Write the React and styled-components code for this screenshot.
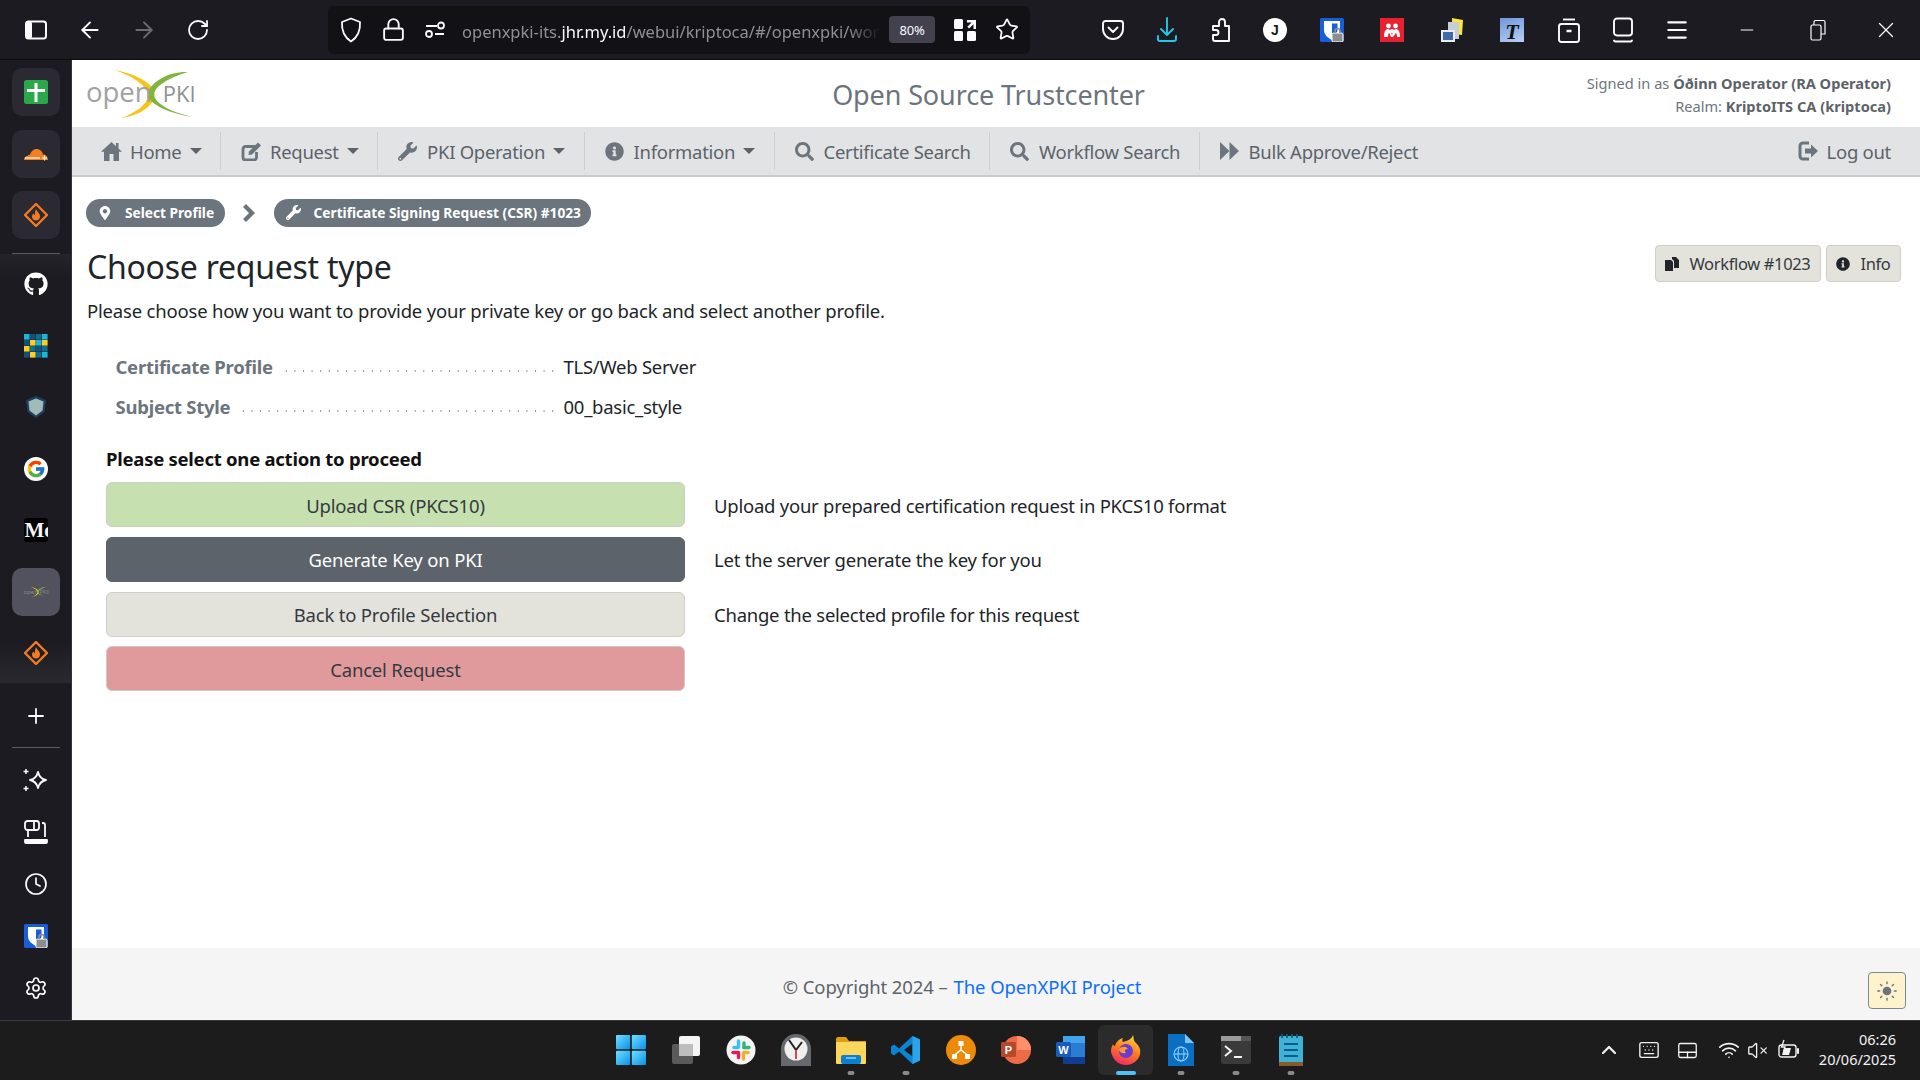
import React from 'react';
import styled, { createGlobalStyle } from 'styled-components';
import { ArrowLeft, ArrowRight, RotateCw, Lock, Star, Menu, Plus, Clock, Settings, ChevronUp, Keyboard, Touchpad, Wifi, VolumeX, Sun, Minus, X } from 'lucide-react';
import { FaGithub, FaWrench, FaInfoCircle, FaSearch, FaMapMarkerAlt } from 'react-icons/fa';
import { FcGoogle } from 'react-icons/fc';

const FONT = '"Noto Sans", "Open Sans", sans-serif';

const GlobalStyle = createGlobalStyle`
  html, body { margin: 0; padding: 0; background: #1c1b22; }
  * { box-sizing: border-box; }
  body { font-family: ${FONT}; }
`;

const Desktop = styled.div`
  width: 1920px;
  height: 1080px;
  overflow: hidden;
  display: grid;
  grid-template-columns: 72px minmax(0, 1fr);
  grid-template-rows: 60px 1fr 60px;
`;

/* browser toolbar */
const BrowserBar = styled.header`
  grid-column: 1 / 3;
  background: #1c1b22;
  border-bottom: 1px solid #0e0e12;
  display: flex;
  align-items: center;
  padding-left: 9px;
  color: #fbfbfe;
`;

const Slot = styled.div`
  width: ${p => p.$w || 54}px;
  height: 40px;
  flex: none;
  display: flex;
  align-items: center;
  justify-content: center;
  padding-left: ${p => p.$shift || 0}px;
  color: ${p => p.$dim ? '#6b6b72' : '#fbfbfe'};
`;

const UrlBox = styled.div`
  width: 702px;
  height: 48px;
  flex: none;
  margin-left: 103px;
  margin-right: 56px;
  background: #111116;
  border-radius: 6px;
  display: flex;
  align-items: center;
  padding-left: 2px;
`;

const UrlSlot = styled(Slot)`
  width: ${p => p.$w || 42}px;
`;

const UrlText = styled.div`
  width: 419px;
  margin-left: 6px;
  padding-top: 3px;
  white-space: nowrap;
  overflow: hidden;
  font-size: 16.5px;
  color: #8f8f96;
  -webkit-mask-image: linear-gradient(to right, #000 92%, transparent);
  mask-image: linear-gradient(to right, #000 92%, transparent);
  b { font-weight: 400; color: #fbfbfe; }
`;

const ZoomBadge = styled.div`
  width: 46px;
  height: 27px;
  margin-left: 8px;
  border-radius: 4px;
  background: #42414d;
  color: #fbfbfe;
  font-size: 13px;
  letter-spacing: -0.3px;
  display: flex;
  align-items: center;
  justify-content: center;
`;

const Avatar = styled.div`
  width: 24px;
  height: 24px;
  border-radius: 50%;
  background: #fff;
  color: #1c1b22;
  font-family: "Liberation Sans", sans-serif;
  font-size: 14px;
  font-weight: 700;
  display: flex;
  align-items: center;
  justify-content: center;
`;

const RedTile = styled.div`
  width: 24px;
  height: 24px;
  background: #e8202f;
  color: #fff;
  display: flex;
  align-items: center;
  justify-content: center;
`;

const BlueTile = styled.div`
  width: 24px;
  height: 24px;
  background: linear-gradient(160deg, #6f97dc, #b9cdf2);
  color: #111;
  font-family: "Liberation Serif", serif;
  font-style: italic;
  font-weight: 700;
  font-size: 22px;
  line-height: 28px;
  text-align: center;
`;

/* sidebar */
const Sidebar = styled.aside`
  background: #1c1b22;
  border-right: 1px solid #33323a;
  padding-top: 8px;
  display: flex;
  flex-direction: column;
  align-items: center;
`;

const Tile = styled.div`
  width: 48px;
  height: 48px;
  flex: none;
  border-radius: 10px;
  background: #2b2a33;
  margin-bottom: ${p => p.$gap ?? 13.5}px;
  display: flex;
  align-items: center;
  justify-content: center;
  color: #fbfbfe;
`;

const SideDivider = styled.div`
  width: 48px;
  height: 1px;
  flex: none;
  background: #5b5b63;
  margin: ${p => p.$margin};
`;

const PanelGroup = styled.div`
  width: 71px;
  flex: none;
  padding-top: 6px;
  height: 429px;
  display: flex;
  flex-direction: column;
  align-items: center;
  background: linear-gradient(to bottom, #25242a 0, #1c1b22 22px, #1c1b22 388px, #2a292f 100%);
`;

const PanelSlot = styled.div`
  width: 48px;
  height: 48px;
  flex: none;
  margin-bottom: 13.5px;
  border-radius: 10px;
  background: ${p => p.$active ? '#52525e' : 'transparent'};
  display: flex;
  align-items: center;
  justify-content: center;
  color: #fff;
`;

const SideTool = styled.div`
  height: ${p => p.$h || 52}px;
  width: 48px;
  flex: none;
  display: flex;
  align-items: center;
  justify-content: center;
  color: #fbfbfe;
`;

const MediumTile = styled.div`
  width: 24px;
  height: 24px;
  background: #000;
  border-radius: 3px;
  overflow: hidden;
  color: #f4f4f4;
  font-family: "Liberation Serif", serif;
  font-weight: 700;
  font-size: 21px;
  line-height: 24px;
  white-space: nowrap;
  padding-left: 1px;
`;

const GoogleDisc = styled.div`
  width: 24px;
  height: 24px;
  border-radius: 50%;
  background: #fff;
  display: flex;
  align-items: center;
  justify-content: center;
`;

const MiniLogo = styled.div`
  position: relative;
  width: 24px;
  height: 12px;
  color: #85858c;
  font-size: 6px;
  line-height: 12px;
  white-space: nowrap;
`;

const MiniSwoosh = styled.svg`
  position: absolute;
  left: 0;
  top: -1px;
`;

/* page */
const Page = styled.main`
  background: #fff;
  display: flex;
  flex-direction: column;
  min-height: 0;
  color: #212529;
`;

const TopHeader = styled.div`
  height: 67px;
  flex: none;
  display: grid;
  grid-template-columns: 1fr auto 1fr;
  align-items: center;
  padding: 0 29px 0 14px;
`;

const Logo = styled.div`
  position: relative;
  width: 112px;
  height: 52px;
  display: flex;
  align-items: baseline;
  padding-top: 7px;
  font-family: "Open Sans", sans-serif;
  line-height: 1.2;
`;

const LogoSwoosh = styled.svg`
  position: absolute;
  left: 0;
  top: 0;
`;

const LogoWord = styled.span`
  position: relative;
  z-index: 1;
  font-size: 27.5px;
  color: #a0a2a4;
`;

const LogoPki = styled.span`
  position: relative;
  z-index: 1;
  margin-left: 11px;
  font-size: 22px;
  color: #8f9193;
`;

const SiteTitle = styled.div`
  font-size: 27px;
  letter-spacing: -0.12px;
  color: #6c757d;
  white-space: nowrap;
  padding-top: 2px;
`;

const SignedIn = styled.div`
  justify-self: end;
  text-align: right;
  font-size: 14.6px;
  line-height: 23px;
  color: #6c757d;
  padding-top: 3px;
  b { font-weight: 700; color: #5c636a; }
`;

const Nav = styled.nav`
  height: 50px;
  flex: none;
  background: #e1e3e5;
  border-bottom: 2px solid #c9cbcd;
  display: flex;
  align-items: center;
  padding: 0 29px 0 9px;
  color: #5c636a;
  font-size: 18.5px;
  letter-spacing: -0.28px;
`;

const NavItem = styled.div`
  height: 38px;
  display: flex;
  align-items: center;
  padding: 0 18.4px 0 20px;
  border-right: ${p => p.$last ? 'none' : '1px solid #cdcfd1'};
  white-space: nowrap;
`;

const NavIcon = styled.span`
  width: 21px;
  margin-right: 8px;
  flex: none;
  display: flex;
  align-items: center;
  justify-content: flex-start;
  color: #6c757d;
`;

const Caret = styled.span`
  width: 0;
  height: 0;
  margin-left: 8px;
  border-left: 6px solid transparent;
  border-right: 6px solid transparent;
  border-top: 6px solid #5c636a;
`;

const LogOut = styled.div`
  margin-left: auto;
  display: flex;
  align-items: center;
  white-space: nowrap;
`;

const Content = styled.div`
  flex: 1;
  min-height: 0;
  padding: 21px 19px 0 14px;
`;

const Crumbs = styled.div`
  display: flex;
  align-items: center;
  height: 28px;
  padding-top: 1px;
`;

const Crumb = styled.div`
  height: 28px;
  padding: 0 10.5px 0 12px;
  border-radius: 14px;
  background: #6c757d;
  color: #fff;
  font-size: 13.7px;
  font-weight: 700;
  display: flex;
  align-items: center;
  white-space: nowrap;
  svg { margin-right: 13px; }
`;

const CrumbArrow = styled.div`
  width: 49px;
  display: flex;
  justify-content: center;
  color: #6c757d;
`;

const TitleRow = styled.div`
  display: flex;
  justify-content: space-between;
  align-items: flex-start;
  margin-top: 19px;
`;

const Title = styled.h1`
  margin: 2px 0 0 1px;
  font-size: 32px;
  letter-spacing: -0.25px;
  line-height: 40px;
  font-weight: 400;
  color: #212529;
`;

const TitleTools = styled.div`
  display: flex;
  gap: 5px;
`;

const ToolButton = styled.div`
  height: 37px;
  padding: 0 9.5px;
  background: #e3e3dc;
  border: 1px solid #cfcfc9;
  border-radius: 4px;
  font-size: 16.5px;
  letter-spacing: -0.35px;
  display: flex;
  align-items: center;
  color: #343a40;
  svg { margin-right: 10px; color: #212529; }
`;

const Intro = styled.p`
  margin: 11px 0 0 1px;
  font-size: 18.5px;
  letter-spacing: -0.19px;
  line-height: 26px;
`;

const Facts = styled.div`
  margin-top: 22px;
  padding-left: 29.5px;
  letter-spacing: -0.26px;
`;

const FactRow = styled.div`
  height: 40px;
  display: flex;
  align-items: center;
  font-size: 18.5px;
`;

const FactLabel = styled.div`
  width: 448px;
  display: flex;
  align-items: center;
  font-weight: 700;
  color: #6c757d;
  white-space: nowrap;
`;

const Leader = styled.span`
  flex: 1;
  height: 2px;
  margin: 9px 5px 0 9px;
  background-image: radial-gradient(circle, #8a9197 0.8px, transparent 1px);
  background-size: 8.6px 2px;
  background-position: left center;
`;

const Actions = styled.section`
  margin-top: 21px;
  padding-left: 20px;
`;

const ActionsTitle = styled.div`
  height: 24px;
  line-height: 24px;
  font-size: 18.5px;
  letter-spacing: -0.25px;
  font-weight: 700;
  margin-bottom: 11px;
  color: #111;
`;

const ActionRow = styled.div`
  display: grid;
  grid-template-columns: 579px 1fr;
  column-gap: 29px;
  align-items: center;
  margin-bottom: 9.8px;
  font-size: 18.5px;
  letter-spacing: -0.24px;
`;

const VARIANTS = {
  upload: { bg: '#c7e0af', border: '#c9cec4', fg: '#343a40' },
  generate: { bg: '#5c636a', border: '#5c636a', fg: '#fff' },
  back: { bg: '#e3e3dc', border: '#cfcfcb', fg: '#343a40' },
  cancel: { bg: '#e19a9c', border: '#d5c5c5', fg: '#343a40' },
};

const ActionButton = styled.div`
  height: 45px;
  border-radius: 6px;
  border: 1.5px solid ${p => VARIANTS[p.$kind].border};
  background: ${p => VARIANTS[p.$kind].bg};
  color: ${p => VARIANTS[p.$kind].fg};
  display: flex;
  align-items: center;
  justify-content: center;
  letter-spacing: -0.18px;
  padding-top: 1px;
`;

const ActionHint = styled.span`
  padding-top: 1px;
`;

const Footer = styled.footer`
  position: relative;
  height: 72px;
  flex: none;
  background: #f5f5f5;
  display: flex;
  align-items: center;
  justify-content: center;
  padding: 4px 68px 0 0;
  font-size: 18.5px;
  letter-spacing: -0.1px;
  color: #5c636a;
  a { color: #0d6efd; text-decoration: none; margin-left: 6px; }
`;

const ThemeToggle = styled.div`
  position: absolute;
  right: 14px;
  top: 24px;
  width: 38px;
  height: 37px;
  border-radius: 4px;
  border: 1px solid #7f8790;
  background: #fff3cd;
  color: #6c757d;
  display: flex;
  align-items: center;
  justify-content: center;
`;

/* windows taskbar */
const Taskbar = styled.footer`
  grid-column: 1 / 3;
  background: #1c1c1c;
  border-top: 1px solid #3a3a3a;
  display: flex;
  align-items: center;
  padding-left: 603px;
  padding-bottom: 1px;
  color: #f2f2f2;
`;

const TaskSlot = styled.div`
  position: relative;
  width: 55px;
  height: 50px;
  flex: none;
  border-radius: 6px;
  background: ${p => p.$active ? '#2b2b2b' : 'transparent'};
  display: flex;
  align-items: center;
  justify-content: center;
  &::after {
    content: '';
    display: ${p => p.$run ? 'block' : 'none'};
    position: absolute;
    bottom: 0;
    left: 50%;
    transform: translateX(-50%);
    width: ${p => p.$active ? 20 : 7}px;
    height: 4px;
    border-radius: 2px;
    background: ${p => p.$active ? '#4fc1f5' : '#8a8a8a'};
  }
`;

const Tray = styled.div`
  margin-left: auto;
  display: flex;
  align-items: center;
  padding-right: 24px;
`;

const TraySlot = styled.div`
  width: ${p => p.$w}px;
  display: flex;
  justify-content: center;
  align-items: center;
  color: #f2f2f2;
  svg { flex: none; }
`;

const TrayClock = styled.div`
  margin-left: 6px;
  width: 78px;
  text-align: right;
  font-size: 14.5px;
  line-height: 20px;
  padding-bottom: 3px;
`;

/* drawn icons */
const SidebarToggle = () => (
  <svg width="24" height="24" viewBox="0 0 24 24" fill="none">
    <rect x="2" y="3.500" width="20" height="17" rx="2.500" stroke="#fbfbfe" strokeWidth="2" />
    <rect x="2" y="3.500" width="6" height="17" rx="2" fill="#fbfbfe" />
  </svg>
);

const ShieldIcon = () => (
  <svg width="24" height="26" viewBox="0 0 24 26" fill="none" stroke="#fbfbfe" strokeWidth="1.800" strokeLinejoin="round">
    <path d="M12 1.500 L21 5 C21.500 13 19 20 12 24.500 C5 20 2.500 13 3 5 Z" />
  </svg>
);

const PermIcon = () => (
  <svg width="22" height="22" viewBox="0 0 22 22" fill="none" stroke="#fbfbfe" strokeWidth="1.800">
    <path d="M2 7h11M11 15h9" />
    <circle cx="17" cy="6.500" r="3" />
    <circle cx="5" cy="15" r="3" />
  </svg>
);

const QrIcon = () => (
  <svg width="24" height="24" viewBox="0 0 24 24" fill="#fbfbfe">
    <rect x="1" y="1" width="9" height="10" rx="1.500" />
    <rect x="1" y="13" width="9" height="10" rx="1.500" />
    <rect x="14" y="13" width="9" height="10" rx="1.500" />
    <path d="M14 2h9v9h-2.500V6.200L16 10.500 14.300 8.800 18.700 4.500H14z" />
  </svg>
);

const PocketIcon = () => (
  <svg width="24" height="24" viewBox="0 0 24 24" fill="none" stroke="#fbfbfe" strokeWidth="1.900" strokeLinecap="round" strokeLinejoin="round">
    <path d="M4.500 3h15A2.500 2.500 0 0 1 22 5.500V11a10 10 0 0 1-20 0V5.500A2.500 2.500 0 0 1 4.500 3z" />
    <path d="M7.500 9.500 12 14l4.500-4.500" />
  </svg>
);

const DownloadIcon = () => (
  <svg width="24" height="26" viewBox="0 0 24 26" fill="none" stroke="#22c8e8" strokeWidth="1.900" strokeLinecap="round" strokeLinejoin="round">
    <path d="M12 1v17M6 12l6 6 6-6" />
    <path d="M3 19v3a2 2 0 0 0 2 2h14a2 2 0 0 0 2-2v-3" />
  </svg>
);

const PuzzleIcon = () => (
  <svg width="24" height="26" viewBox="0 0 24 26" fill="none" stroke="#fbfbfe" strokeWidth="1.900" strokeLinejoin="round">
    <path d="M10 9V5a3 3 0 0 1 6 0v4h4v15H6a2 2 0 0 1-2-2v-4h3a2.500 2.500 0 0 0 0-5H4v-4z" />
  </svg>
);

const Bitwarden = () => (
  <svg width="24" height="24" viewBox="0 0 24 24">
    <rect width="24" height="24" rx="1.500" fill="#175ddc" />
    <path d="M4 3h16v9c0 5-4 8-8 10-4-2-8-5-8-10z" fill="#fff" />
    <path d="M12 5.500h5.500v6.500c0 3-2.500 5.200-5.500 7z" fill="#175ddc" />
    <rect x="12" y="15" width="11" height="9" rx="1.500" fill="#8d8d8d" stroke="#fff" strokeWidth="1" />
    <path d="M15 15v-2a2.500 2.500 0 0 1 5 0v2" fill="none" stroke="#8d8d8d" strokeWidth="1.600" />
  </svg>
);

const MendeleyIcon = () => (
  <svg width="16" height="14" viewBox="0 0 16 14" fill="#fff">
    <circle cx="4.500" cy="3" r="2.400" /><circle cx="11.500" cy="3" r="2.400" /><circle cx="8" cy="8" r="2" />
    <path d="M0 14c0-6 2-8 4-8s3 3 4 6c1-3 2-6 4-6s4 2 4 8h-3c0-2-.5-4-1.200-4L9 14H7L5.200 10C4.500 10 4 12 4 14z" />
  </svg>
);

const DocsIcon = () => (
  <svg width="24" height="26" viewBox="0 0 24 26">
    <path d="M12 1l11 2-1 15-10-1z" fill="#f4e63c" />
    <rect x="8" y="5" width="11" height="17" fill="#c8ccd4" />
    <rect x="1" y="13" width="14" height="12" fill="#e9ecf0" />
    <rect x="3" y="15" width="10" height="8" fill="#3d6aa8" />
  </svg>
);

const ContainerIcon = () => (
  <svg width="24" height="26" viewBox="0 0 24 26" fill="none" stroke="#fbfbfe" strokeWidth="1.900" strokeLinejoin="round">
    <rect x="2" y="7" width="20" height="18" rx="2.500" />
    <path d="M6 2.500h12" /><path d="M9.500 14h5" strokeWidth="2.500" />
  </svg>
);

const TabsIcon = () => (
  <svg width="24" height="26" viewBox="0 0 24 26" fill="none" stroke="#fbfbfe" strokeWidth="1.900" strokeLinejoin="round" strokeLinecap="round">
    <rect x="3" y="1.500" width="18" height="17" rx="3" />
    <path d="M3 23.500a2 2 0 0 0 2 1h14a2 2 0 0 0 2-1" />
  </svg>
);

const RestoreIcon = () => (
  <svg width="16" height="22" viewBox="0 0 16 22" fill="none" stroke="#fbfbfe" strokeWidth="1.200">
    <rect x="1" y="6" width="10" height="15" rx="1.500" />
    <path d="M4 6V3a1.500 1.500 0 0 1 1.500-1.500h8A1.500 1.500 0 0 1 15 3v12h-4" />
  </svg>
);

const SheetIcon = () => (
  <svg width="24" height="24" viewBox="0 0 24 24">
    <rect width="24" height="24" rx="2.500" fill="#2ba84a" />
    <path d="M10.500 3h3v6H21v3h-7.500v10h-3V12H3V9h7.500z" fill="#fff" />
  </svg>
);

const CloudIcon = () => (
  <svg width="24" height="24" viewBox="0 0 24 24">
    <path d="M0 18c0-2.500 1.500-4 3.500-4 .5-1 1.500-1.500 2.500-1.200C7 9.500 9.500 7 12.500 7c3.500 0 6 2.500 6.500 5.500 2.500 0 5 2 5 5.500z" fill="#f38020" />
    <path d="M1 16h15" stroke="#fff" strokeWidth="1.200" />
    <path d="M18 16h5M20.500 13.500v5" stroke="#fff" strokeWidth="1.200" />
  </svg>
);

const DiamondFlame = () => (
  <svg width="24" height="24" viewBox="0 0 24 24" fill="none">
    <path d="M12 1 L23 12 L12 23 L1 12 Z" stroke="#f47b20" strokeWidth="2.400" strokeLinejoin="round" />
    <path d="M12 6c1 3 4 4 4 7.500 0 2.500-2 4-4 4s-4-1.500-4-4c0-1.500 1-2.500 1.500-3 .5 1 1 1.500 1.500 1.500 0-2 0-4 1-6z" fill="#f47b20" />
  </svg>
);

const GridIcon = () => {
  const c = { a: '#1fb4d8', b: '#14507f', t: '#0f6f86', y: '#f8cf26' };
  const rows = ['abta', 'byay', 'ytbt', 'byta'];
  return (
    <svg width="24" height="24" viewBox="0 0 24 24">
      {rows.map((r, y) => r.split('').map((k, x) => (
        <rect key={`${x}-${y}`} x={x * 6} y={y * 6} width="5.600" height="5.600" fill={c[k]} />
      )))}
    </svg>
  );
};

const HexShield = () => (
  <svg width="24" height="24" viewBox="0 0 24 24">
    <path d="M12 1 L22 5 L20.500 17 L12 23 L3.500 17 L2 5 Z" fill="#1f3f5e" />
    <path d="M12 3.500 L19.500 6.500 L18.500 15.500 L12 20.500 L5.500 15.500 L4.500 6.500 Z" fill="#9fbdb8" />
  </svg>
);

const SparkIcon = () => (
  <svg width="26" height="26" viewBox="0 0 26 26" fill="none" stroke="#fbfbfe" strokeWidth="1.900" strokeLinejoin="round">
    <path d="M15 5c1 4 3 7 8 8-5 1-7 4-8 8-1-4-3-7-8-8 5-1 7-4 8-8z" />
    <path d="M3 2v5M.5 4.500h5M3 19v5M.5 21.500h5" strokeWidth="1.500" />
  </svg>
);

const SyncedIcon = () => (
  <svg width="24" height="24" viewBox="0 0 24 24" fill="none" stroke="#fbfbfe" strokeWidth="1.800" strokeLinejoin="round">
    <rect x="1" y="1" width="14" height="9" rx="2.500" />
    <path d="M10 1v9" />
    <path d="M18 3h1a2 2 0 0 1 2 2v12M4 10v7" />
    <path d="M1 20h22v2a1 1 0 0 1-1 1H2a1 1 0 0 1-1-1z" fill="#fbfbfe" />
  </svg>
);

const Swoosh = () => (
  <>
    <path d="M29 2 C55 7 73 19 68 31 C63 42 49 48 36 50 C50 44 61 37 62 28 C62 18 48 9 29 2 Z" fill="#f5c518" />
    <path d="M102 4 C85 3 67 12 62 24 C59 34 80 45 107 49 C88 45 71 37 68 28 C67 18 85 9 102 4 Z" fill="#7fb53c" />
  </>
);

const HomeGlyph = () => (
  <svg width="21" height="20" viewBox="0 0 21 20" fill="currentColor">
    <path d="M10.500 1 L15 5.200 V2 H17.500 V7.500 L21 10.800 H18 V20 H12.500 V13 H8.500 V20 H3 V10.800 H0 Z" />
  </svg>
);

const EditGlyph = () => (
  <svg width="21" height="20" viewBox="0 0 21 20" fill="none" stroke="currentColor">
    <path d="M15 5.500H4.500A2.500 2.500 0 0 0 2 8v8.500A2.500 2.500 0 0 0 4.500 19H13a2.500 2.500 0 0 0 2.500-2.500V11" strokeWidth="2.800" />
    <path d="M7.500 14 L8 10.500 L17 1.500 L20 4.500 L11 13.500 Z" fill="currentColor" stroke="none" />
  </svg>
);

const ForwardGlyph = () => (
  <svg width="19" height="18" viewBox="0 0 19 18" fill="currentColor">
    <path d="M0 0 L9.500 9 L0 18 Z" /><path d="M9.500 0 L19 9 L9.500 18 Z" />
  </svg>
);

const LogOutGlyph = () => (
  <svg width="21" height="20" viewBox="0 0 21 20" fill="none">
    <path d="M11 2H5a3 3 0 0 0-3 3v10a3 3 0 0 0 3 3h6" stroke="currentColor" strokeWidth="3" />
    <path d="M7 7.500h6V3.500l7 6.500-7 6.500v-4H7z" fill="currentColor" />
  </svg>
);

const CrumbChevron = () => (
  <svg width="12" height="18" viewBox="0 0 12 18" fill="currentColor">
    <path d="M0 3 L3 0 L12 9 L3 18 L0 15 L6 9 Z" />
  </svg>
);

const WorkflowGlyph = () => (
  <svg width="14" height="14" viewBox="0 0 14 14" fill="currentColor">
    <path d="M0 3h6l2 2v9H0z" />
    <path d="M7 0h4l3 3v8H9V4L7 2z" />
  </svg>
);

const WinLogo = () => (
  <svg width="30" height="30" viewBox="0 0 30 30">
    <defs>
      <linearGradient id="wing" x1="0" y1="0" x2="1" y2="1">
        <stop offset="0" stopColor="#6fe0ff" />
        <stop offset="1" stopColor="#0a8fe8" />
      </linearGradient>
    </defs>
    <rect x="0" y="0" width="14.200" height="14.200" rx="1" fill="url(#wing)" />
    <rect x="15.800" y="0" width="14.200" height="14.200" rx="1" fill="url(#wing)" />
    <rect x="0" y="15.800" width="14.200" height="14.200" rx="1" fill="url(#wing)" />
    <rect x="15.800" y="15.800" width="14.200" height="14.200" rx="1" fill="url(#wing)" />
  </svg>
);

const TaskViewIcon = () => (
  <svg width="30" height="30" viewBox="0 0 30 30">
    <rect x="1" y="9" width="21" height="20" rx="2" fill="#5a5a5a" />
    <rect x="8" y="1" width="21" height="20" rx="2" fill="#f4f4f4" />
    <rect x="8" y="9" width="14" height="12" fill="#bdbdbd" />
  </svg>
);

const SlackIcon = () => (
  <svg width="30" height="30" viewBox="0 0 30 30">
    <circle cx="15" cy="15" r="14.500" fill="#f4f4f4" />
    <g strokeWidth="3.400" strokeLinecap="round">
      <path d="M12.500 6v6" stroke="#36c5f0" /><path d="M8 12.500h4" stroke="#36c5f0" />
      <path d="M18 8v4.500" stroke="#2eb67d" /><path d="M18 12.500h5" stroke="#2eb67d" />
      <path d="M17.500 18v6" stroke="#ecb22e" /><path d="M18 17.500h4" stroke="#ecb22e" />
      <path d="M12.500 17.500v5" stroke="#e01e5a" /><path d="M7 17.500h5" stroke="#e01e5a" />
    </g>
  </svg>
);

const ClockAppIcon = () => (
  <svg width="30" height="32" viewBox="0 0 30 32">
    <path d="M0 32V15a15 15 0 0 1 30 0v17z" fill="#666a6e" />
    <circle cx="15" cy="15" r="11.500" fill="#f0f0f0" />
    <path d="M15 16L8 6M15 16l6-8" stroke="#222" strokeWidth="2" />
    <path d="M15 16v9" stroke="#d33" strokeWidth="1.800" />
  </svg>
);

const FolderIcon = () => (
  <svg width="30" height="28" viewBox="0 0 30 28">
    <path d="M0 3a2 2 0 0 1 2-2h8l3 4h17v3H0z" fill="#d9a012" />
    <rect x="0" y="6" width="30" height="22" rx="1" fill="#fbd75b" />
    <rect x="5" y="19" width="20" height="9" rx="2" fill="#0c7fd0" />
    <path d="M10 22h10" stroke="#8fd0f5" strokeWidth="1.500" />
  </svg>
);

const VscodeIcon = () => (
  <svg width="30" height="30" viewBox="0 0 30 30">
    <path d="M21.500 1 L29 4.500 V25.500 L21.500 29 L8 16.500 L3 20.500 L0 18.500 V11.500 L3 9.500 L8 13.500 Z M21.500 8.500 L13 15 L21.500 21.500 Z" fill="#0a84d6" />
    <path d="M21.500 1 L29 4.500 V25.500 L21.500 29 Z" fill="#2aa5ec" />
  </svg>
);

const OrangeAppIcon = () => (
  <svg width="30" height="30" viewBox="0 0 30 30">
    <ellipse cx="15" cy="15" rx="15" ry="15" fill="#ee8a0a" />
    <g fill="none" stroke="#fff" strokeWidth="1.500">
      <path d="M15 11v4M8.500 20l6.500-5 6.500 5" />
    </g>
    <g fill="#fff">
      <rect x="12.500" y="6" width="5" height="5" /><rect x="6" y="19" width="5" height="5" /><rect x="19" y="19" width="5" height="5" />
    </g>
  </svg>
);

const OfficeIcon = ({ letter, tile, shades }) => (
  <svg width="30" height="30" viewBox="0 0 30 30">
    {shades}
    <rect x="0" y="7" width="15" height="15" rx="1.500" fill={tile} />
    <text x="7.500" y="18.500" textAnchor="middle" fill="#fff" fontSize="11" fontWeight="700" fontFamily="Liberation Sans, sans-serif">{letter}</text>
  </svg>
);

const FirefoxIcon = () => (
  <svg width="30" height="30" viewBox="0 0 30 30">
    <defs>
      <linearGradient id="ffg" x1="0.7" y1="0" x2="0.3" y2="1">
        <stop offset="0" stopColor="#ffd43b" />
        <stop offset="0.5" stopColor="#ff7a1f" />
        <stop offset="1" stopColor="#f0266a" />
      </linearGradient>
    </defs>
    <path d="M22 0c1 3 0 5 3 8 3 3 5 6 4 11-1 6-7 11-14 11C7 30 1 24 0 16c0-3 1-5 2-7 0 1 1 2 2 2 1-4 4-7 8-8-1 2-1 3 0 4 4-1 9-3 10-7z" fill="url(#ffg)" />
    <circle cx="15" cy="16" r="7" fill="#6a3bd1" />
    <path d="M8 14c3-3 7-3 9 0-3 0-4 2-2 4-4 1-7-1-7-4z" fill="#ff9a2e" />
  </svg>
);

const GlobeFileIcon = () => (
  <svg width="26" height="32" viewBox="0 0 26 32">
    <path d="M0 0h17l9 9v23H0z" fill="#0a6fc2" />
    <path d="M17 0l9 9h-9z" fill="#7cc4f0" />
    <g fill="none" stroke="#8fd0f5" strokeWidth="1.100">
      <circle cx="13" cy="20" r="7" />
      <ellipse cx="13" cy="20" rx="3" ry="7" />
      <path d="M6 20h14" />
    </g>
  </svg>
);

const TerminalIcon = () => (
  <svg width="30" height="28" viewBox="0 0 30 28">
    <rect width="30" height="28" rx="2" fill="#3a3a3a" />
    <rect width="20" height="5" fill="#9a9a9a" />
    <rect x="20" width="10" height="5" fill="#555" />
    <path d="M4 10l6 5-6 5" fill="none" stroke="#f2f2f2" strokeWidth="2" />
    <path d="M13 21h8" stroke="#f2f2f2" strokeWidth="2" />
  </svg>
);

const NotepadIcon = () => (
  <svg width="24" height="32" viewBox="0 0 24 32">
    <rect y="2" width="24" height="30" rx="1.500" fill="#3fb2d8" />
    <rect y="28" width="24" height="4" fill="#8a5a2b" />
    <path d="M3 0v4M8 0v4M13 0v4M18 0v4" stroke="#0f5f85" strokeWidth="1.800" />
    <path d="M5 10h14M5 16h14M5 22h14" stroke="#0a5c8a" strokeWidth="2" />
  </svg>
);

const BatteryIcon = () => (
  <svg width="22" height="22" viewBox="0 0 22 22" fill="none" stroke="#f2f2f2" strokeWidth="1.400">
    <rect x="1" y="6" width="17" height="12" rx="2.500" />
    <path d="M20 10v4" strokeWidth="2" strokeLinecap="round" />
    <path d="M4 16l2-7h7l-2 7z" fill="#f2f2f2" stroke="none" />
    <path d="M6 1L3.500 8H7l-1.500 5" strokeWidth="1.300" />
  </svg>
);

const NAV_ITEMS = [
  { icon: <HomeGlyph />, label: 'Home', caret: true },
  { icon: <EditGlyph />, label: 'Request', caret: true },
  { icon: <FaWrench size={19} />, label: 'PKI Operation', caret: true },
  { icon: <FaInfoCircle size={19} />, label: 'Information', caret: true },
  { icon: <FaSearch size={19} />, label: 'Certificate Search' },
  { icon: <FaSearch size={19} />, label: 'Workflow Search' },
  { icon: <ForwardGlyph />, label: 'Bulk Approve/Reject', last: true },
];

const ACTIONS = [
  { kind: 'upload', label: 'Upload CSR (PKCS10)', hint: 'Upload your prepared certification request in PKCS10 format' },
  { kind: 'generate', label: 'Generate Key on PKI', hint: 'Let the server generate the key for you' },
  { kind: 'back', label: 'Back to Profile Selection', hint: 'Change the selected profile for this request' },
  { kind: 'cancel', label: 'Cancel Request' },
];

export default function App() {
  return (
    <Desktop>
      <GlobalStyle />
      <BrowserBar>
        <Slot><SidebarToggle /></Slot>
        <Slot><ArrowLeft size={26} strokeWidth={1.8} /></Slot>
        <Slot $dim><ArrowRight size={26} strokeWidth={1.8} /></Slot>
        <Slot><RotateCw size={24} strokeWidth={1.8} /></Slot>
        <UrlBox>
          <UrlSlot><ShieldIcon /></UrlSlot>
          <UrlSlot><Lock size={25} strokeWidth={1.8} /></UrlSlot>
          <UrlSlot><PermIcon /></UrlSlot>
          <UrlText>openxpki-its.<b>jhr.my.id</b>/webui/kriptoca/#/openxpki/wor</UrlText>
          <ZoomBadge>80%</ZoomBadge>
          <UrlSlot $w={60}><QrIcon /></UrlSlot>
          <UrlSlot $w={24}><Star size={25} strokeWidth={1.8} /></UrlSlot>
        </UrlBox>
        <Slot><PocketIcon /></Slot>
        <Slot><DownloadIcon /></Slot>
        <Slot><PuzzleIcon /></Slot>
        <Slot><Avatar>J</Avatar></Slot>
        <Slot $w={59}><Bitwarden /></Slot>
        <Slot $w={61}><RedTile><MendeleyIcon /></RedTile></Slot>
        <Slot $w={60}><DocsIcon /></Slot>
        <Slot $w={60}><BlueTile>T</BlueTile></Slot>
        <Slot><ContainerIcon /></Slot>
        <Slot><TabsIcon /></Slot>
        <Slot><Menu size={26} strokeWidth={2} /></Slot>
        <Slot $w={86}><Minus size={20} strokeWidth={1.2} /></Slot>
        <Slot $w={56}><RestoreIcon /></Slot>
        <Slot $w={74} $shift={6}><X size={26} strokeWidth={1.2} /></Slot>
      </BrowserBar>

      <Sidebar>
        <Tile><SheetIcon /></Tile>
        <Tile><CloudIcon /></Tile>
        <Tile $gap={14}><DiamondFlame /></Tile>
        <SideDivider $margin="0" />
        <PanelGroup>
          <PanelSlot><FaGithub size={24} /></PanelSlot>
          <PanelSlot><GridIcon /></PanelSlot>
          <PanelSlot><HexShield /></PanelSlot>
          <PanelSlot><GoogleDisc><FcGoogle size={20} /></GoogleDisc></PanelSlot>
          <PanelSlot><MediumTile>Me</MediumTile></PanelSlot>
          <PanelSlot $active>
            <MiniLogo>
              open PKI
              <MiniSwoosh width="24" height="14" viewBox="0 0 112 52"><Swoosh /></MiniSwoosh>
            </MiniLogo>
          </PanelSlot>
          <PanelSlot><DiamondFlame /></PanelSlot>
        </PanelGroup>
        <SideTool $h={66}><Plus size={24} strokeWidth={1.8} /></SideTool>
        <SideDivider $margin="-2px 0 6px" />
        <SideTool><SparkIcon /></SideTool>
        <SideTool><SyncedIcon /></SideTool>
        <SideTool><Clock size={24} strokeWidth={1.7} /></SideTool>
        <SideTool><Bitwarden /></SideTool>
        <SideTool><Settings size={24} strokeWidth={1.7} /></SideTool>
      </Sidebar>

      <Page>
        <TopHeader>
          <Logo>
            <LogoSwoosh width="112" height="52" viewBox="0 0 112 52"><Swoosh /></LogoSwoosh>
            <LogoWord>open</LogoWord><LogoPki>PKI</LogoPki>
          </Logo>
          <SiteTitle>Open Source Trustcenter</SiteTitle>
          <SignedIn>
            Signed in as <b>Óðinn Operator (RA Operator)</b><br />
            Realm: <b>KriptoITS CA (kriptoca)</b>
          </SignedIn>
        </TopHeader>
        <Nav>
          {NAV_ITEMS.map(item => (
            <NavItem key={item.label} $last={item.last}>
              <NavIcon>{item.icon}</NavIcon>{item.label}{item.caret && <Caret />}
            </NavItem>
          ))}
          <LogOut><NavIcon><LogOutGlyph /></NavIcon>Log out</LogOut>
        </Nav>
        <Content>
          <Crumbs>
            <Crumb><FaMapMarkerAlt size={14} />Select Profile</Crumb>
            <CrumbArrow><CrumbChevron /></CrumbArrow>
            <Crumb><FaWrench size={15} />Certificate Signing Request (CSR) #1023</Crumb>
          </Crumbs>
          <TitleRow>
            <Title>Choose request type</Title>
            <TitleTools>
              <ToolButton><WorkflowGlyph />Workflow #1023</ToolButton>
              <ToolButton><FaInfoCircle size={14} />Info</ToolButton>
            </TitleTools>
          </TitleRow>
          <Intro>Please choose how you want to provide your private key or go back and select another profile.</Intro>
          <Facts>
            <FactRow><FactLabel>Certificate Profile<Leader /></FactLabel>TLS/Web Server</FactRow>
            <FactRow><FactLabel>Subject Style<Leader /></FactLabel>00_basic_style</FactRow>
          </Facts>
          <Actions>
            <ActionsTitle>Please select one action to proceed</ActionsTitle>
            {ACTIONS.map(a => (
              <ActionRow key={a.kind}>
                <ActionButton $kind={a.kind}>{a.label}</ActionButton>
                <ActionHint>{a.hint}</ActionHint>
              </ActionRow>
            ))}
          </Actions>
        </Content>
        <Footer>
          © Copyright 2024 – <a href="#openxpki">The OpenXPKI Project</a>
          <ThemeToggle><Sun size={22} fill="#6c757d" strokeWidth={1.5} /></ThemeToggle>
        </Footer>
      </Page>

      <Taskbar>
        <TaskSlot><WinLogo /></TaskSlot>
        <TaskSlot><TaskViewIcon /></TaskSlot>
        <TaskSlot><SlackIcon /></TaskSlot>
        <TaskSlot><ClockAppIcon /></TaskSlot>
        <TaskSlot $run><FolderIcon /></TaskSlot>
        <TaskSlot $run><VscodeIcon /></TaskSlot>
        <TaskSlot><OrangeAppIcon /></TaskSlot>
        <TaskSlot>
          <OfficeIcon letter="P" tile="#b7472a" shades={<><circle cx="16" cy="15" r="14" fill="#ed6c47" /><path d="M16 1a14 14 0 0 1 14 14H16z" fill="#ff8f6b" /></>} />
        </TaskSlot>
        <TaskSlot>
          <OfficeIcon letter="W" tile="#185abd" shades={<><rect x="7" y="1" width="22" height="28" rx="1.500" fill="#2b7cd3" /><rect x="7" y="1" width="22" height="7" fill="#41a5ee" /><rect x="7" y="22" width="22" height="7" fill="#103f91" /></>} />
        </TaskSlot>
        <TaskSlot $run $active><FirefoxIcon /></TaskSlot>
        <TaskSlot $run><GlobeFileIcon /></TaskSlot>
        <TaskSlot $run><TerminalIcon /></TaskSlot>
        <TaskSlot $run><NotepadIcon /></TaskSlot>
        <Tray>
          <TraySlot $w={40}><ChevronUp size={24} strokeWidth={2.2} /></TraySlot>
          <TraySlot $w={39}><Keyboard size={22} strokeWidth={1.5} /></TraySlot>
          <TraySlot $w={39}><Touchpad size={21} strokeWidth={1.5} /></TraySlot>
          <TraySlot $w={43}><Wifi size={22} strokeWidth={1.8} /></TraySlot>
          <TraySlot $w={15}><VolumeX size={21} strokeWidth={1.5} /></TraySlot>
          <TraySlot $w={47}><BatteryIcon /></TraySlot>
          <TrayClock>06:26<br />20/06/2025</TrayClock>
        </Tray>
      </Taskbar>
    </Desktop>
  );
}
